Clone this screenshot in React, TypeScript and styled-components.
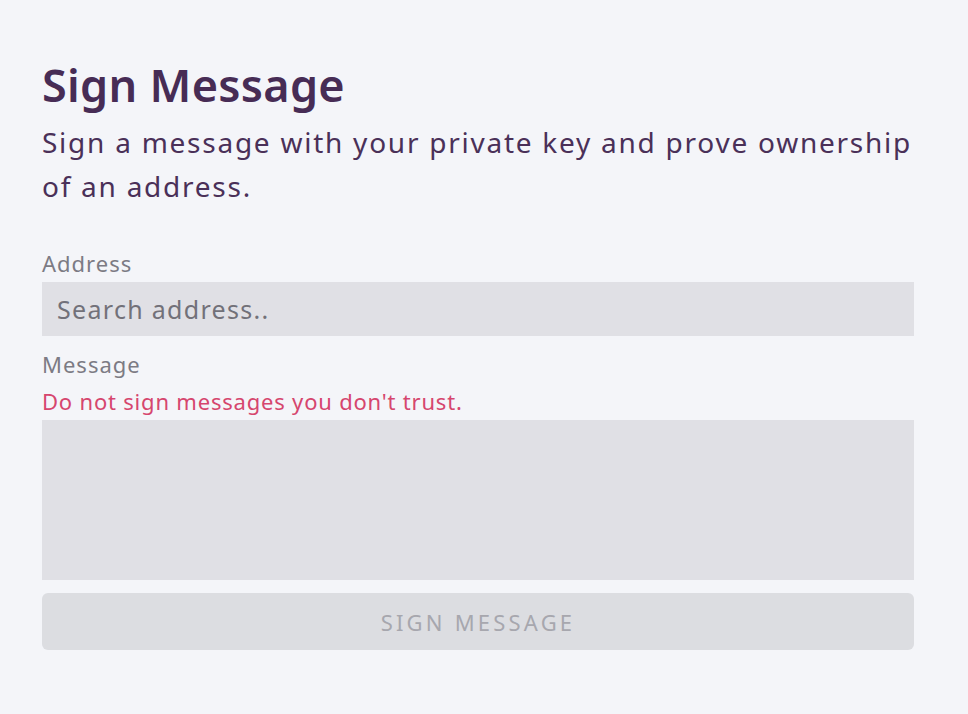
import React, { useState } from 'react';
import styled, { createGlobalStyle } from 'styled-components';

const GlobalStyle = createGlobalStyle`
  html, body {
    margin: 0;
    padding: 0;
    background: #f4f5f9;
  }

  body {
    font-family: 'Noto Sans', 'Liberation Sans', sans-serif;
  }
`;

function App() {
  const [address, setAddress] = useState('');
  const [message, setMessage] = useState('');

  return (
    <>
      <GlobalStyle />
      <Wrapper>
        <Title>Sign Message</Title>
        <Description>Sign a message with your private key and prove ownership of an address.</Description>
        <Field>
          <Label htmlFor='address'>Address</Label>
          <Input
            id='address'
            placeholder='Search address..'
            value={address}
            onChange={(e) => setAddress(e.target.value)}
          />
        </Field>
        <Field>
          <Label htmlFor='message'>Message</Label>
          <Warning>Do not sign messages you don't trust.</Warning>
          <TextArea id='message' value={message} onChange={(e) => setMessage(e.target.value)} />
        </Field>
        <SubmitButton disabled>Sign Message</SubmitButton>
      </Wrapper>
    </>
  );
}

export default App;

const Wrapper = styled.main`
  width: 872px;
  padding: 55px 42px 0;
  display: flex;
  flex-direction: column;
`;

const Title = styled.h1`
  margin: 0;
  font-size: 45px;
  line-height: 60px;
  font-weight: 600;
  color: #472c55;
  letter-spacing: 0.3px;
`;

const Description = styled.p`
  margin: 5px 0 40px;
  font-size: 28px;
  line-height: 44px;
  letter-spacing: 1.75px;
  color: #4a3058;
`;

const Field = styled.div`
  display: flex;
  flex-direction: column;
  margin-bottom: 13px;
`;

const Label = styled.label`
  font-size: 22px;
  line-height: 30px;
  letter-spacing: 1px;
  color: #7c7b84;
  margin-bottom: 4px;
`;

const Warning = styled.div`
  font-size: 22px;
  line-height: 30px;
  letter-spacing: 0.8px;
  color: #d6466e;
  margin-top: 3px;
  margin-bottom: 4px;
`;

const Input = styled.input`
  box-sizing: border-box;
  width: 100%;
  height: 54px;
  border: none;
  outline: none;
  background: #e0e0e5;
  padding: 0 15px;
  font-family: inherit;
  font-size: 25px;
  letter-spacing: 1.3px;
  color: #4a3058;

  &::placeholder {
    color: #727179;
  }
`;

const TextArea = styled.textarea`
  box-sizing: border-box;
  display: block;
  width: 100%;
  height: 160px;
  border: none;
  outline: none;
  resize: none;
  background: #e0e0e5;
  padding: 12px 15px;
  font-family: inherit;
  font-size: 22px;
  color: #4a3058;
`;

const SubmitButton = styled.button`
  height: 57px;
  width: 100%;
  border: none;
  border-radius: 6px;
  background: #dcdde1;
  color: #a7a7ae;
  font-family: inherit;
  font-size: 22px;
  letter-spacing: 3.2px;
  text-transform: uppercase;
  cursor: not-allowed;
`;
